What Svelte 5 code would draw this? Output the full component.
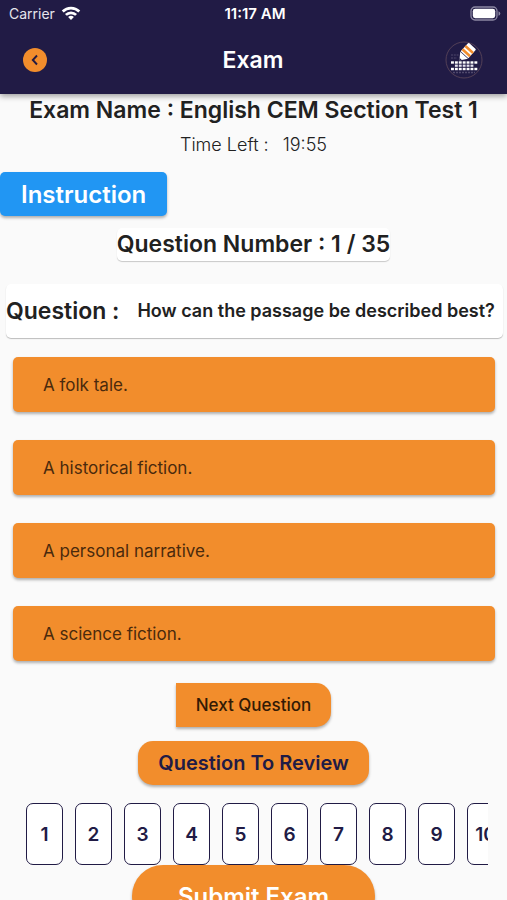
<script>
  const options = [
    'A folk tale.',
    'A historical fiction.',
    'A personal narrative.',
    'A science fiction.'
  ];
  const total = 35;
  const numbers = Array.from({ length: 10 }, (_, i) => i + 1);
  const keys = [0, 1, 2, 3, 4, 5, 6];
  let current = $state(1);
</script>

<div class="screen">
  <header>
    <div class="status">
      <span class="carrier">
        Carrier
        <svg width="20" height="15" viewBox="0 0 20 15" aria-hidden="true">
          <g fill="none" stroke="#fff" stroke-width="2.7">
            <path d="M1.7 5.5a11.8 11.8 0 0 1 16.6 0" />
            <path d="M4.9 8.9a7.2 7.2 0 0 1 10.2 0" />
          </g>
          <path d="M10 14 7.1 11.1a4.1 4.1 0 0 1 5.8 0Z" fill="#fff" />
        </svg>
      </span>
      <span class="clock">11:17 AM</span>
      <span class="battery">
        <svg width="31" height="15" viewBox="0 0 31 15" aria-hidden="true">
          <rect x="1" y="1" width="26" height="13" rx="4" fill="none" stroke="#8c88a3" stroke-width="1.3" />
          <rect x="2.8" y="2.8" width="22.4" height="9.4" rx="2.4" fill="#fff" />
          <path d="M28.5 5.2v4.6q1.8-.7 1.8-2.3t-1.8-2.3Z" fill="#8c88a3" />
        </svg>
      </span>
    </div>
    <div class="bar">
      <button class="back" aria-label="Back">
        <svg width="24" height="24" viewBox="0 0 24 24" aria-hidden="true">
          <path d="M14 7.5 9.8 12l4.2 4.5" fill="none" stroke="#241b41" stroke-width="1.9" />
        </svg>
      </button>
      <h1>Exam</h1>
      <svg class="logo" width="38" height="38" viewBox="0 0 38 38" aria-hidden="true">
        <circle cx="19" cy="19" r="18" fill="none" stroke="#60495a" stroke-width=".8" />
        <path d="M6 14h8M6 17h6" stroke="#50496c" stroke-width="1.2" stroke-dasharray="2 .8" />
        <g transform="translate(14.4 19.4) rotate(-48)">
          <path d="M0 0 7-5.2v10.4Z" fill="#fff" />
          <path d="M0 0 2-1.5v3Z" fill="#241b41" />
          <path d="M7.6-5.2h10.6q1.2 0 1.2 1.2v8q0 1.2-1.2 1.2H7.6Z" fill="#fff" />
          <path d="M9-5.2h2.5v10.4H9zM13.4-5.2h2.5v10.4h-2.5z" fill="#f28d2c" />
        </g>
        {#each keys as k}
          <rect x={6 + k * 3.9} y="20.3" width="2.9" height="2.4" fill="#fff" />
          {#if k > 0 && k < 6}
            <rect x={6 + k * 3.9} y="23.6" width="2.9" height="2.2" fill="#e4e2ee" />
          {/if}
          <rect x={6 + k * 3.9} y="26.8" width="2.9" height="2.4" fill="#fff" />
        {/each}
        <path d="M8 31.5h22" stroke="#50496c" stroke-width="1.5" stroke-dasharray="2 1" />
      </svg>
    </div>
  </header>

  <main>
    <h2 class="heading">Exam Name : English CEM Section Test 1</h2>
    <p class="time"><span>Time Left :</span><span>19:55</span></p>
    <button class="instruction">Instruction</button>
    <h2 class="heading counter">Question Number : {current} / {total}</h2>

    <section class="question">
      <h2 class="heading">Question :</h2>
      <p>How can the passage be described best?</p>
    </section>

    <div class="options">
      {#each options as option}
        <button>{option}</button>
      {/each}
    </div>

    <button class="next">Next Question</button>
    <button class="review">Question To Review</button>

    <nav aria-label="Questions">
      {#each numbers as n}
        <button onclick={() => (current = n)}>{n}</button>
      {/each}
    </nav>

    <button class="submit">Submit Exam</button>
  </main>
</div>

<style>
  :global(body) {
    margin: 0;
    background: #fafafa;
  }

  .screen {
    height: 100vh;
    overflow: hidden;
    display: flex;
    flex-direction: column;
    background: #fafafa;
    color: #212121;
    font-family: Inter, "Liberation Sans", sans-serif;
  }

  button {
    flex: none;
    border: 0;
    padding: 0;
    color: inherit;
    font-family: inherit;
    cursor: pointer;
  }

  h1,
  h2,
  p {
    margin: 0;
  }

  header {
    position: relative;
    z-index: 1;
    flex: none;
    background: #211b45;
    color: #fff;
    box-shadow: 0 2px 6px rgba(0, 0, 0, 0.4);
  }

  .status {
    display: grid;
    grid-template-columns: 1fr auto 1fr;
    align-items: center;
    height: 27px;
    padding: 0 6px 0 9px;
    font-size: 14px;
  }

  .carrier {
    display: flex;
    align-items: center;
    gap: 6px;
    color: #e6e5ec;
  }

  .clock {
    font-size: 15px;
    font-weight: 600;
  }

  .battery {
    display: flex;
    justify-content: flex-end;
  }

  .bar {
    display: grid;
    grid-template-columns: 1fr auto 1fr;
    align-items: center;
    height: 65px;
    padding: 0 24px 2px 23px;
  }

  .back {
    display: flex;
    width: 24px;
    height: 24px;
    border-radius: 50%;
    background: #f28d2c;
  }

  h1 {
    font-size: 23px;
    line-height: 32px;
    font-weight: 600;
  }

  .logo {
    justify-self: end;
  }

  main {
    flex: 1;
    min-height: 0;
    overflow-y: auto;
    scrollbar-width: none;
    display: flex;
    flex-direction: column;
    align-items: center;
  }

  .heading {
    flex: none;
    font-size: 23px;
    line-height: 33px;
    font-weight: 600;
    white-space: nowrap;
  }

  .time {
    display: flex;
    flex: none;
    gap: 14px;
    margin: 6px 0 15px;
    font-size: 18px;
    line-height: 24px;
    font-weight: 300;
  }

  .instruction {
    align-self: flex-start;
    height: 44px;
    padding: 0 21px;
    border-radius: 5px;
    background: #2196f3;
    color: #fff;
    font-size: 24px;
    font-weight: 600;
    box-shadow: 0 2px 3px rgba(0, 0, 0, 0.3);
  }

  .counter {
    margin: 12px 0 23px;
    border-radius: 5px;
    background: #fff;
    box-shadow: 0 1px 1px rgba(0, 0, 0, 0.2);
  }

  .question {
    align-self: stretch;
    flex: none;
    display: flex;
    align-items: center;
    gap: 18px;
    height: 54px;
    margin: 0 4px 0 6px;
    border-radius: 5px;
    background: #fff;
    box-shadow: 0 1px 1px rgba(0, 0, 0, 0.25);
  }

  .question p {
    font-size: 18px;
    line-height: 24px;
    font-weight: 600;
    white-space: nowrap;
  }

  .options {
    align-self: stretch;
    flex: none;
    display: flex;
    flex-direction: column;
    gap: 28px;
    margin: 19px 12px 22px 13px;
  }

  .options button {
    height: 55px;
    padding: 0 30px;
    border-radius: 5px;
    background: #f28d2c;
    color: #4a2a0d;
    font-size: 17px;
    text-align: left;
    box-shadow: 0 2px 3px rgba(0, 0, 0, 0.3);
  }

  .next,
  .review {
    height: 44px;
    padding: 0 20px;
    background: #f28d2c;
    box-shadow: 0 2px 3px rgba(0, 0, 0, 0.3);
  }

  .next {
    border-radius: 0 15px 15px 0;
    color: #321a05;
    font-size: 17px;
    font-weight: 500;
  }

  .review {
    margin-top: 14px;
    border-radius: 15px;
    color: #211b45;
    font-size: 20px;
    font-weight: 600;
  }

  nav {
    align-self: stretch;
    flex: none;
    display: flex;
    gap: 12px;
    margin: 18px 19px 0 26px;
    overflow-x: auto;
    scrollbar-width: none;
  }

  nav button {
    width: 37px;
    height: 62px;
    border: 1px solid #211b45;
    border-radius: 7px;
    background: #fff;
    color: #211b45;
    font-size: 19px;
    font-weight: 600;
  }

  .submit {
    height: 62px;
    padding: 0 46px;
    border-radius: 31px;
    background: #f28d2c;
    color: #fff;
    font-size: 24px;
    font-weight: 600;
    box-shadow: 0 2px 3px rgba(0, 0, 0, 0.3);
  }
</style>
